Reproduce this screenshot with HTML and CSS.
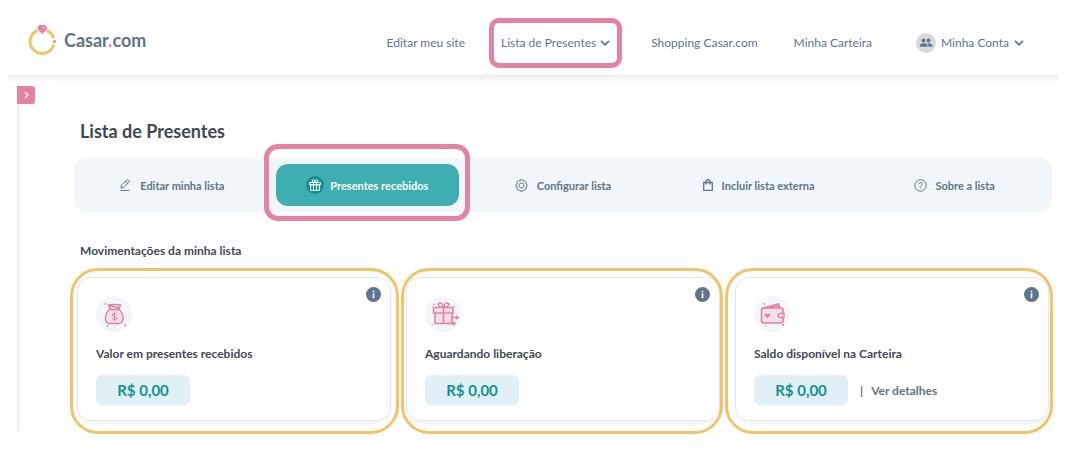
FILE: index.html
```
<!DOCTYPE html>
<html lang="pt-BR">
<head>
    <meta charset="UTF-8">
    <meta name="viewport" content="width=device-width, initial-scale=1.0">
    <title>Lista de Presentes - Casar.com</title>
    <link rel="stylesheet" href="styles.css">
</head>
<body>
<!-- topo -->
<header class="header">
    <a class="logo" href="#">
        <svg width="30" height="32" viewBox="0 0 30 32" fill="none">
            <path d="M9.200 6.600A12 12 0 1 0 25.700 20.600" stroke="#f2c36b" stroke-width="3"/>
            <path d="M18.600 6.500A12 12 0 0 1 25.600 14" stroke="#f2c36b" stroke-width="3"/>
            <path d="M11.400 1h5.800l2 2.600-.7 2.300L14.200 10 10 5.900 9.300 3.600z" fill="#e582a3"/>
            <path d="M14.500 3l1.500 1 1.500-1.500" stroke="#fff" stroke-width=".7"/>
            <circle cx="26.500" cy="17.500" r="1.500" fill="#e582a3"/>
        </svg>
        <span class="logo-text">Casar<i>.</i>com</span>
    </a>
    <nav class="nav">
        <a href="#">Editar meu site</a>
        <a class="nav-current" href="#">Lista de Presentes
            <svg width="10" height="6" viewBox="0 0 10 6" fill="none" stroke="#5d758f" stroke-width="1.800"><path d="M1 .8l4 4 4-4"/></svg>
        </a>
        <a href="#">Shopping Casar.com</a>
        <a href="#">Minha Carteira</a>
        <a class="account" href="#">
            <span class="avatar">
                <svg width="14" height="10" viewBox="0 0 14 10" fill="#5d758f"><circle cx="4.500" cy="2.500" r="1.900"/><circle cx="9.500" cy="2.500" r="1.900"/><path d="M.8 8.800V7.500C.8 6.100 3 5.300 4.700 5.300s3.800.8 3.800 2.200v1.300z"/><path d="M9.300 8.800V7.300c0-.8-.4-1.400-1-1.900 2-.4 5.100.4 5.100 2.100v1.300z"/></svg>
            </span>
            Minha Conta
            <svg width="10" height="6" viewBox="0 0 10 6" fill="none" stroke="#5d758f" stroke-width="1.800"><path d="M1 .8l4 4 4-4"/></svg>
        </a>
    </nav>
</header>

<div class="page">
    <aside class="sidebar">
        <button class="toggle" type="button" aria-label="Abrir menu">
            <svg width="5" height="8" viewBox="0 0 5 8" fill="none" stroke="#fff" stroke-width="1.200"><path d="M.8.8L4 4 .8 7.200"/></svg>
        </button>
    </aside>
    <main class="content">
        <h1 class="title">Lista de Presentes</h1>

        <!-- abas -->
        <nav class="tabs">
            <a class="tab" href="#">
                <svg width="12" height="12" viewBox="0 0 12 12" fill="none" stroke="#5d758f"><path d="M2 9l.5-2.800L7.800.9c.4-.4.9-.4 1.300 0l.9.9c.4.4.4.900 0 1.300L4.700 8.400z M6.700 2l2.200 2.200M1.500 11.400h9"/></svg>
                Editar minha lista
            </a>
            <a class="tab active" href="#">
                <span class="tab-badge">
                    <svg width="12" height="12" viewBox="0 0 12 12" fill="none" stroke="#fff"><path d="M.6 3.500h10.800v2.300H.6zM1.600 5.800h8.800v5.600H1.600zM4.500 3.500v7.900M7.500 3.500v7.900M6 3.500C3 3.500 2.500.7 4.200.7 5.500.7 6 2 6 3.500c0-1.500.5-2.800 1.800-2.800C9.500.7 9 3.500 6 3.500z"/></svg>
                </span>
                Presentes recebidos
            </a>
            <a class="tab" href="#">
                <svg width="13" height="13" viewBox="0 0 13 13" fill="none" stroke="#5d758f"><path d="M5.400.8h2.200l.6 1.200 1.300-.4 1.500 1.500-.4 1.300 1.300.6v3l-1.300.6.4 1.300-1.500 1.500-1.300-.4-.6 1.200H5.400L4.800 11l-1.300.4L2 9.900l.4-1.300-1.300-.6V5l1.300-.6L2 3.100l1.500-1.500 1.300.4z"/><circle cx="6.500" cy="6.500" r="2.500"/></svg>
                Configurar lista
            </a>
            <a class="tab" href="#">
                <svg width="10" height="12" viewBox="0 0 10 12" fill="none" stroke="#5d758f" stroke-width="1.300"><path d="M.7 3.500h8.600v7.800H.7zM3 5.500V2.700C3 .1 7 .1 7 2.700v2.800"/></svg>
                Incluir lista externa
            </a>
            <a class="tab" href="#">
                <svg width="13" height="13" viewBox="0 0 13 13" fill="none" stroke="#5d758f"><circle cx="6.500" cy="6.500" r="5.700"/><path d="M4.900 5.200c0-2.200 3.300-2 3.300-.1 0 1.200-1.600 1.200-1.600 2.500M6.600 8.500v1.100"/></svg>
                Sobre a lista
            </a>
        </nav>

        <h2 class="subtitle">Movimentações da minha lista</h2>

        <!-- cartões -->
        <div class="cards">
            <section class="card">
                <div class="card-top">
                    <span class="card-icon">
                        <svg width="28" height="28" viewBox="0 0 28 28" fill="none" stroke="#e582a3"><path d="M9.500 9.500C6.500 12 5.400 15 5.400 18c0 4 2 5.500 4.600 5.500h8.500c2.600 0 4.600-1.500 4.600-5.500 0-3-1.100-6-4.100-8.500z" fill="#f3dfe8" stroke-width="1.500"/><path d="M8.500 5c2-.8 9.500-.8 12 0L19 8.800c-2.500.9-7 .9-9.300 0zM8.500 5l10.500 3" stroke-width="1.500"/><path d="M16.600 14.400c-.7-1.400-4.300-1.200-4.300.7 0 2.100 4.500.9 4.500 3 0 1.900-4 2-4.700.3M14.500 12.500v8.500"/><path d="M4.500 4h2M5.500 3v2M6.500 26h2M7.500 25v2M24 24l2 2M26 24l-2 2" stroke-width=".8"/></svg>
                    </span>
                    <button class="info" type="button" aria-label="Informações">
                        <svg width="15" height="15" viewBox="0 0 15 15"><circle cx="7.500" cy="7.500" r="7.500" fill="#5d758f"/><path d="M6.700 3.700h1.600v1.500H6.700zM6.700 6.300h1.600v5H6.700z" fill="#fff"/></svg>
                    </button>
                </div>
                <h3 class="card-title">Valor em presentes recebidos</h3>
                <div class="card-row"><span class="value">R$ 0,00</span></div>
            </section>
            <section class="card">
                <div class="card-top">
                    <span class="card-icon">
                        <svg width="30" height="28" viewBox="0 0 30 28" fill="none" stroke="#e582a3"><path d="M7 13h17v10.500H7zM5.500 7.500H25V13H5.500z" fill="#f3dfe8" stroke-width="1.600"/><path d="M15.500 7.500v16M15 7.500c-4.500 0-6.500-4-3.500-4.500 2.500-.4 3.500 2 3.500 4.500M16 7.500c4.500 0 6.500-4 3.500-4.500-2.500-.4-3.500 2-3.500 4.500" stroke-width="1.500"/><path d="M23 17.500h7M28.300 15.500l2 2-2 2M20 23.500h7M25.300 21.500l2 2-2 2" stroke-width="1.300"/><path d="M5 3.500l2 2M7 3.500l-2 2M26 6.500h1.500M3.500 25h1.500" stroke-width=".8"/></svg>
                    </span>
                    <button class="info" type="button" aria-label="Informações">
                        <svg width="15" height="15" viewBox="0 0 15 15"><circle cx="7.500" cy="7.500" r="7.500" fill="#5d758f"/><path d="M6.700 3.700h1.600v1.500H6.700zM6.700 6.300h1.600v5H6.700z" fill="#fff"/></svg>
                    </button>
                </div>
                <h3 class="card-title">Aguardando liberação</h3>
                <div class="card-row"><span class="value">R$ 0,00</span></div>
            </section>
            <section class="card">
                <div class="card-top">
                    <span class="card-icon">
                        <svg width="28" height="28" viewBox="0 0 28 28" fill="none" stroke="#e582a3"><rect x="3.500" y="8" width="21.500" height="15" rx="2" fill="#f3dfe8" stroke-width="1.600"/><path d="M5 8l15.500-4 1.700 4M9 8l12-2" stroke-width="1.500"/><path d="M26 13.500h-4c-2.500 0-2.500 4 0 4h4z" fill="#f3dfe8" stroke-width="1.500"/><path d="M9.500 18.200l-2.600-2.700c-.9-1.500 1.400-3 2.600-1.200 1.200-1.800 3.500-.3 2.600 1.200z" fill="#e582a3" stroke="none"/><path d="M5 4h2M6 3v2M20 3.500h1M7 26h1.500M24 24l2 2M26 24l-2 2" stroke-width=".8"/></svg>
                    </span>
                    <button class="info" type="button" aria-label="Informações">
                        <svg width="15" height="15" viewBox="0 0 15 15"><circle cx="7.500" cy="7.500" r="7.500" fill="#5d758f"/><path d="M6.700 3.700h1.600v1.500H6.700zM6.700 6.300h1.600v5H6.700z" fill="#fff"/></svg>
                    </button>
                </div>
                <h3 class="card-title">Saldo disponível na Carteira</h3>
                <div class="card-row">
                    <span class="value">R$ 0,00</span>
                    <span class="bar">|</span>
                    <a class="details" href="#">Ver detalhes</a>
                </div>
            </section>
            <!-- contornos de destaque -->
            <div class="rings" aria-hidden="true">
                <span class="ring"></span>
                <span class="ring"></span>
                <span class="ring"></span>
            </div>
        </div>
    </main>
</div>
</body>
</html>
```
FILE: styles.css
```
* { box-sizing: border-box; margin: 0; padding: 0; }
a { color: inherit; text-decoration: none; }
button { border: none; background: none; cursor: pointer; }
svg { display: block; flex: none; overflow: visible; }

body {
    min-height: 100vh;
    padding: 0 8px;
    background: #fff;
    color: #3f4854;
    font-family: Lato, "Liberation Sans", sans-serif;
}

/* topo */
.header {
    display: flex;
    align-items: center;
    justify-content: space-between;
    height: 75px;
    padding: 4px 34px 0 20px;
    position: relative;
    background: #fff;
}
/* sombra do topo */
.header:after {
    content: "";
    position: absolute;
    top: 100%;
    left: 0;
    right: 0;
    height: 8px;
    background: linear-gradient(#ededed, #fff);
}
.logo {
    display: flex;
    align-items: center;
    gap: 6px;
}
.logo-text {
    color: #5d758a;
    font-size: 18px;
    font-weight: 700;
    line-height: 24px;
}
.logo-text i {
    color: #e582a3;
    font-style: normal;
}
.nav {
    display: flex;
    align-items: center;
    gap: 36px;
    padding-top: 6px;
    color: #5d758f;
    font-size: 12px;
    line-height: 20px;
    white-space: nowrap;
}
.nav-current {
    display: flex;
    align-items: center;
    gap: 4px;
    margin-right: 5px;
    position: relative;
}
.nav-current:after {
    content: "";
    position: absolute;
    inset: -15px -12px;
    border: 5px solid #e582a3;
    border-radius: 10px;
}
.account {
    display: flex;
    align-items: center;
    gap: 5px;
    margin-left: 8px;
}
.avatar {
    display: flex;
    align-items: center;
    justify-content: center;
    width: 20px;
    height: 20px;
    border-radius: 50%;
    background: #d8d8d8;
}

/* corpo */
.page {
    display: flex;
    margin-left: 9px;
}
.sidebar {
    width: 18px;
    padding-top: 11px;
    background: linear-gradient(to right, #ebebeb, #fff 5px);
}
.toggle {
    display: flex;
    align-items: center;
    justify-content: center;
    width: 18px;
    height: 18px;
    border-radius: 0 3px 3px 0;
    background: #e582a3;
}
.content {
    flex: 1;
    padding: 44px 6px 10px 39px;
}
.title {
    padding-left: 6px;
    font-size: 18px;
    font-weight: 700;
    line-height: 24px;
}

/* abas */
.tabs {
    display: grid;
    grid-template-columns: repeat(5, 1fr);
    margin-top: 15px;
    padding: 6px 0;
    border-radius: 12px;
    background: #f1f6fb;
}
.tab {
    display: flex;
    align-items: center;
    justify-content: center;
    gap: 9px;
    height: 42px;
    margin: 0 6px;
    color: #5d758a;
    font-size: 11px;
    font-weight: 700;
    white-space: nowrap;
}
.tab.active {
    gap: 6px;
    position: relative;
    border-radius: 12px;
    background: #3eaeb1;
    color: #fff;
}
.tab.active:after {
    content: "";
    position: absolute;
    inset: -20px -11px -15px -12px;
    border: 5px solid #e582a3;
    border-radius: 14px;
}
.tab-badge {
    display: flex;
    align-items: center;
    justify-content: center;
    width: 18px;
    height: 18px;
    border-radius: 50%;
    background: #13908f;
}
.subtitle {
    margin-top: 31px;
    padding-left: 6px;
    font-size: 12px;
    font-weight: 700;
    line-height: 16px;
}

/* cartões */
.cards {
    display: grid;
    grid-template-columns: repeat(3, 1fr);
    gap: 15px;
    margin: 18px 3px 0;
    position: relative;
}
.card {
    padding: 18px 18px 15px;
    border: 1px solid #dfe8f2;
    border-radius: 14px;
    box-shadow: 0 4px 4px #f4f6f9;
}
.card-top {
    display: flex;
    align-items: flex-start;
    justify-content: space-between;
}
.card-icon {
    display: flex;
    align-items: center;
    justify-content: center;
    width: 36px;
    height: 36px;
    border-radius: 50%;
    background: #f1f6fb;
}
.info {
    margin: -9px -9px 0 0;
}
.card-title {
    margin-top: 14px;
    font-size: 12px;
    font-weight: 700;
    line-height: 16px;
}
.card-row {
    display: flex;
    align-items: center;
    margin-top: 13px;
    color: #5d758a;
    font-size: 12px;
    font-weight: 700;
}
.value {
    width: 94px;
    border-radius: 6px;
    background: #e1f0f6;
    color: #13908f;
    font-size: 15px;
    line-height: 30px;
    text-align: center;
}
.bar {
    margin: 0 8px 0 12px;
}
.rings {
    display: grid;
    grid-template-columns: 329fr 321fr 328fr;
    gap: 2px;
    position: absolute;
    inset: -9px -4px -13px -7px;
    pointer-events: none;
}
.ring {
    border: 3px solid #f2c36b;
    border-radius: 28px;
}
```
